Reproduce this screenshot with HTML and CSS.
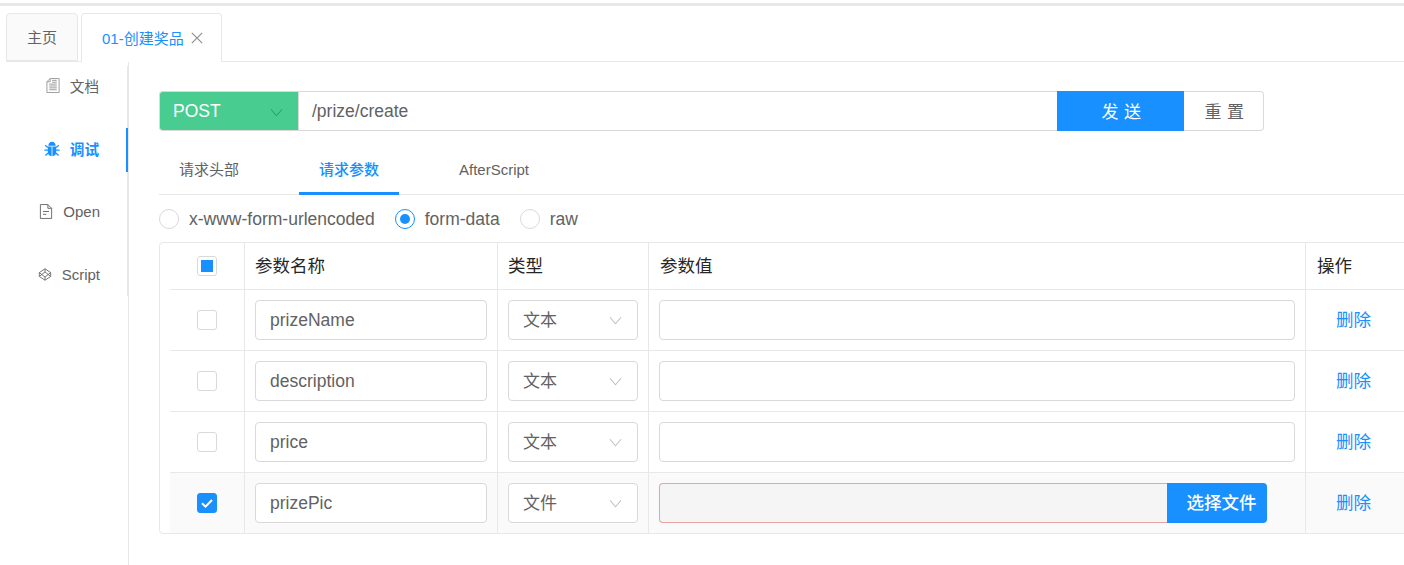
FILE: index.html
```html
<!DOCTYPE html>
<html lang="zh">
<head>
<meta charset="utf-8">
<title>01-创建奖品</title>
<link rel="stylesheet" href="styles.css">
</head>
<body>
<div class="strip"></div>
<div class="tabbar">
  <div class="page-tab">主页</div>
  <div class="page-tab active"><span>01-创建奖品</span>
    <svg class="close" viewBox="0 0 12 12"><path d="M.8.8l10.400 10.400M11.200.8L.8 11.200"/></svg>
  </div>
</div>
<div class="layout">
  <aside class="aside">
    <nav class="nav">
      <div class="nav-item">
        <svg class="ico" viewBox="0 0 14 16"><path class="ln" d="M4 .5h9.500v15H.5V4zM4 .5V4H.5M3 6.500h8M3 8.500h8M3 10.500h8M3 12.500h8M6 4.500h5M6 2.500h5"/></svg>
        <span>文档</span>
      </div>
      <div class="nav-item current">
        <svg class="ico bug" viewBox="0 0 16 16"><path d="M4.300 4.800C4.500 2.400 6 .8 8 .8s3.500 1.600 3.700 4z"/><path d="M3.800 5.500h3.800V15.200C5.200 15 3.800 13.300 3.800 11zM12.200 5.500H8.400v9.700c2.400-.2 3.800-1.900 3.800-4.200z"/><path class="leg" d="M3.800 6.400L1.200 4.200M12.200 6.400l2.600-2.200M4 9.200H.4M12 9.200h3.600M4.200 12l-2.800 2.400M11.800 12l2.800 2.400"/></svg>
        <span>调试</span>
      </div>
      <div class="nav-item latin">
        <svg class="ico" viewBox="0 0 14 16"><path class="ln" d="M1 .6h8l4 4v10.800H1zM9 .6v4h4M3.800 8h6.400M3.800 11h3.600"/></svg>
        <span>Open</span>
      </div>
      <div class="nav-item latin">
        <svg class="ico" viewBox="0 0 16 16"><path class="ln" d="M8 1.500l6.500 4.300v4.400L8 14.500l-6.500-4.300V5.800zM8 1.500v3.600M8 14.500v-3.600M1.500 5.800L8 10.900l6.500-5.100M1.500 10.200L8 5.100l6.500 5.100"/></svg>
        <span>Script</span>
      </div>
    </nav>
  </aside>
  <main class="main">
    <div class="request">
      <div class="method"><span>POST</span>
        <svg class="chev chev-method" viewBox="0 0 14 9"><path d="M1 1l6 7 6-7"/></svg>
      </div>
      <div class="url">/prize/create</div>
      <div class="send">发 送</div>
      <div class="reset">重 置</div>
    </div>
    <div class="subtabs">
      <div class="subtab">请求头部</div>
      <div class="subtab on">请求参数</div>
      <div class="subtab latin">AfterScript</div>
    </div>
    <div class="radios">
      <div class="radio-item"><span class="radio"></span><span class="radio-label">x-www-form-urlencoded</span></div>
      <div class="radio-item"><span class="radio checked"></span><span class="radio-label">form-data</span></div>
      <div class="radio-item"><span class="radio"></span><span class="radio-label">raw</span></div>
    </div>
    <div class="table">
      <div class="row head">
        <div class="cell check"><span class="box partial"></span></div>
        <div class="cell th">参数名称</div>
        <div class="cell th">类型</div>
        <div class="cell th">参数值</div>
        <div class="cell th">操作</div>
      </div>
      <div class="row">
        <div class="cell check"><span class="box"></span></div>
        <div class="cell"><div class="field">prizeName</div></div>
        <div class="cell"><div class="select">文本<svg class="chev" viewBox="0 0 14 9"><path d="M1 1l6 7 6-7"/></svg></div></div>
        <div class="cell"><div class="field"></div></div>
        <div class="cell del">删除</div>
      </div>
      <div class="row">
        <div class="cell check"><span class="box"></span></div>
        <div class="cell"><div class="field">description</div></div>
        <div class="cell"><div class="select">文本<svg class="chev" viewBox="0 0 14 9"><path d="M1 1l6 7 6-7"/></svg></div></div>
        <div class="cell"><div class="field"></div></div>
        <div class="cell del">删除</div>
      </div>
      <div class="row">
        <div class="cell check"><span class="box"></span></div>
        <div class="cell"><div class="field">price</div></div>
        <div class="cell"><div class="select">文本<svg class="chev" viewBox="0 0 14 9"><path d="M1 1l6 7 6-7"/></svg></div></div>
        <div class="cell"><div class="field"></div></div>
        <div class="cell del">删除</div>
      </div>
      <div class="row selected">
        <div class="cell check"><span class="box ticked"><svg viewBox="0 0 20 20"><path d="M5 10.300l3.500 3.400L15 7"/></svg></span></div>
        <div class="cell"><div class="field">prizePic</div></div>
        <div class="cell"><div class="select">文件<svg class="chev" viewBox="0 0 14 9"><path d="M1 1l6 7 6-7"/></svg></div></div>
        <div class="cell"><div class="file"><div class="file-name"></div><div class="file-btn">选择文件</div></div></div>
        <div class="cell del">删除</div>
      </div>
    </div>
  </main>
</div>
</body>
</html>
```
FILE: styles.css
```css
* { box-sizing: border-box; }
html, body { margin: 0; padding: 0; height: 565px; overflow: hidden; background: #fff; }
body {
  font-family: "Liberation Sans", "Noto Sans CJK SC", sans-serif;
  color: #626262;
  display: flex;
  flex-direction: column;
}
.strip { height: 3px; margin-top: 3px; background: #e8e8e8; flex: none; }

.tabbar {
  flex: none;
  height: 56px;
  margin-left: 6px;
  padding-top: 7px;
  border-bottom: 1px solid #e8e8e8;
  display: flex;
  gap: 3px;
  font-size: 15px;
}
.page-tab {
  height: 48px;
  width: 72px;
  background: #fafafa;
  border: 1px solid #e8e8e8;
  border-radius: 4px 4px 0 0;
  display: flex;
  align-items: center;
  justify-content: center;
  padding-bottom: 2px;
}
.page-tab.active {
  width: 141px;
  height: 49px;
  background: #fff;
  border-bottom: 0;
  color: #1890ff;
  padding-bottom: 2px;
  justify-content: flex-start;
  padding-left: 20px;
  gap: 7px;
}
.close { width: 12px; height: 12px; fill: none; stroke: #8c8c8c; stroke-width: 1.1; margin-top: 2px; }

.layout { flex: 1; display: flex; min-height: 0; }
.aside { width: 128px; flex: none; padding-top: 4px; }
.nav {
  display: flex;
  flex-direction: column;
  gap: 22px;
  border-right: 1px solid #e8e8e8;
}
.nav-item {
  position: relative;
  height: 41px;
  padding: 0 28px 2px 0;
  display: flex;
  align-items: center;
  justify-content: flex-end;
  gap: 10px;
  font-size: 14.6px;
}
.nav-item.latin { font-size: 15px; padding-right: 27px; }
.nav-item.current { color: #1890ff; font-weight: 700; }
.nav-item.current::after {
  content: "";
  position: absolute;
  right: -1px;
  top: -1px;
  width: 2px;
  height: 44px;
  background: #1890ff;
}
.ico { width: 14px; height: 15px; flex: none; }
.ln { fill: none; stroke: #666; stroke-width: 1; }
.nav-item:first-child .ln { stroke: #999; }
.bug { width: 16px; height: 16px; fill: #1890ff; }
.leg { fill: none; stroke: #1890ff; stroke-width: 1.3; }

.main {
  flex: 1;
  min-width: 0;
  overflow: hidden;
  border-left: 1px solid #e8e8e8;
  padding: 29px 0 0 30px;
}

.request { display: flex; height: 40px; width: 1105px; font-size: 17.5px; }
.method {
  width: 139px;
  background: #49cc90;
  color: #fff;
  border: 1px solid #d9d9d9;
  border-right: 0;
  border-radius: 4px 0 0 4px;
  padding: 0 15px 0 13px;
  display: flex;
  align-items: center;
  justify-content: space-between;
}
.url {
  width: 759px;
  border: 1px solid #d9d9d9;
  border-right: 0;
  padding-left: 13px;
  display: flex;
  align-items: center;
}
.send, .reset {
  display: flex;
  align-items: center;
  justify-content: center;
  letter-spacing: 0.5px;
  font-size: 17px;
  padding: 0 0 2px 2px;
}
.send { width: 127px; background: #1890ff; color: #fff; }
.reset { width: 80px; border: 1px solid #d9d9d9; border-left: 0; border-radius: 0 4px 4px 0; }
.chev { width: 13px; height: 9px; fill: none; stroke: #bfbfbf; stroke-width: 1.1; flex: none; }
.chev-method { stroke: #2f9e6b; margin-top: 2px; }

.subtabs {
  display: flex;
  gap: 40px;
  height: 45px;
  margin-top: 19px;
  border-bottom: 1px solid #e8e8e8;
  font-size: 15px;
}
.subtab { width: 100px; padding-top: 8px; text-align: center; height: 45px; }
.subtab.latin { text-align: left; padding: 11px 0 0 20px; font-size: 15px; }
.subtab.on { color: #1890ff; border-bottom: 3px solid #1890ff; font-weight: 500; }

.radios {
  display: flex;
  gap: 20px;
  height: 47px;
  align-items: center;
  font-size: 17.5px;
}
.radio-item { display: flex; align-items: center; gap: 10px; }
.radio-label { padding-top: 2px; }
.radio {
  width: 20px;
  height: 20px;
  border: 1px solid #d9d9d9;
  border-radius: 50%;
  display: flex;
  align-items: center;
  justify-content: center;
}
.radio.checked { border-color: #1890ff; }
.radio.checked::after { content: ""; width: 10px; height: 10px; border-radius: 50%; background: #1890ff; }

.table {
  width: 1300px;
  height: 292px;
  border: 1px solid #e8e8e8;
  border-radius: 4px 0 0 4px;
  font-size: 17.5px;
}
.row {
  display: grid;
  grid-template-columns: 75px 253px 151px 657px 1fr;
  height: 61px;
  margin-left: 10px;
  border-bottom: 1px solid #e8e8e8;
}
.row:last-child { border-bottom: 0; height: 60px; background: #fafafa; }
.row.head { height: 47px; }
.cell { border-right: 1px solid #e8e8e8; padding: 10px; min-width: 0; }
.cell:last-child { border-right: 0; }
.check { display: flex; align-items: center; justify-content: center; padding: 0; }
.th { color: #262626; padding: 0 10px 3px; display: flex; align-items: center; font-size: 17.5px; }
.th:nth-child(n+4) { padding-left: 11px; }
.box {
  width: 20px;
  height: 20px;
  border: 1px solid #d9d9d9;
  border-radius: 3px;
  background: #fff;
  display: flex;
  align-items: center;
  justify-content: center;
}
.box.partial::after { content: ""; width: 12px; height: 12px; background: #1890ff; }
.box.ticked { background: #1890ff; border-color: #1890ff; }
.box.ticked svg { width: 20px; height: 20px; flex: none; fill: none; stroke: #fff; stroke-width: 2; }

.field, .select {
  height: 40px;
  background: #fff;
  border: 1px solid #d9d9d9;
  border-radius: 4px;
  padding: 0 14px;
  display: flex;
  align-items: center;
}
.select { justify-content: space-between; font-size: 17px; padding-bottom: 4px; }
.select .chev { margin: 5px 1px 0 0; }
.file { display: flex; height: 40px; width: 608px; }
.file-name { flex: 1; background: #f5f5f5; border: 1px solid #e8a4a4; border-right: 0; border-radius: 4px 0 0 4px; }
.file-btn {
  width: 100px;
  background: #1890ff;
  color: #fff;
  border-radius: 0 4px 4px 0;
  display: flex;
  align-items: center;
  justify-content: center;
  padding: 0 0 4px 9px;
  font-weight: 500;
}
.del { color: #1890ff; padding: 0 0 4px 30px; display: flex; align-items: center; }
```
